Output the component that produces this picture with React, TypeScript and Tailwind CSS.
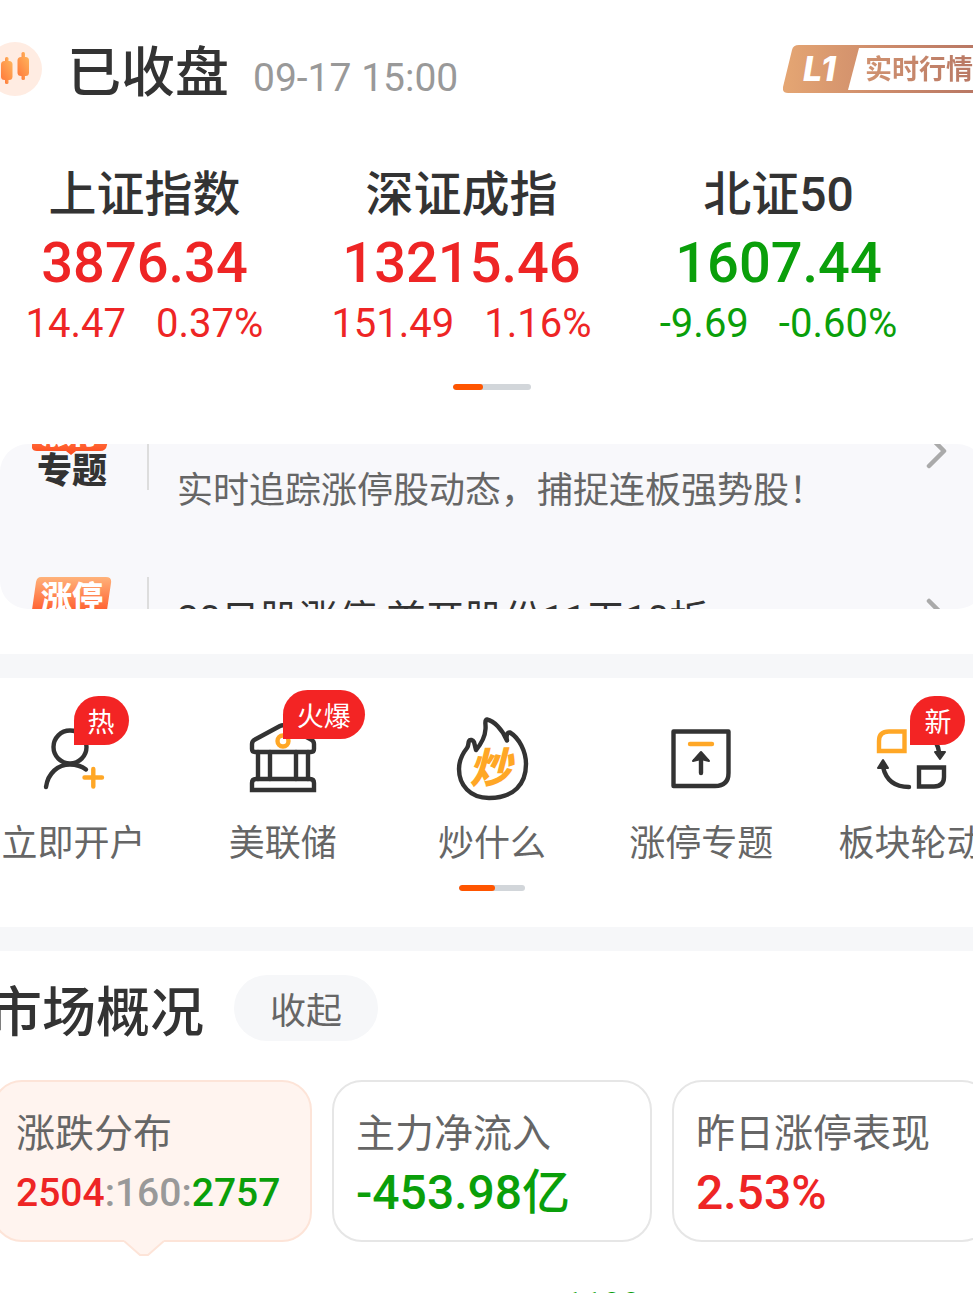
import React from 'react';

// ── Data ────────────────────────────────────────────────────────────────────

type Trend = 'up' | 'down';

interface IndexQuote {
  name: string;
  value: string;
  change: string;
  percent: string;
  trend: Trend;
}

interface Shortcut {
  label: string;
  icon: React.ReactNode;
  badge?: string;
}

const QUOTES: IndexQuote[] = [
  { name: '上证指数', value: '3876.34',  change: '14.47',  percent: '0.37%',  trend: 'up' },
  { name: '深证成指', value: '13215.46', change: '151.49', percent: '1.16%',  trend: 'up' },
  { name: '北证50',   value: '1607.44',  change: '-9.69',  percent: '-0.60%', trend: 'down' },
];

const SHORTCUTS: Shortcut[] = [
  { label: '立即开户', icon: <AccountIcon />, badge: '热' },
  { label: '美联储',   icon: <BankIcon />,    badge: '火爆' },
  { label: '炒什么',   icon: <FlameIcon /> },
  { label: '涨停专题', icon: <LimitUpIcon /> },
  { label: '板块轮动', icon: <RotationIcon />, badge: '新' },
];

const trendColor: Record<Trend, string> = {
  up: 'text-[#ee2525]',
  down: 'text-[#0a9f0a]',
};

// ── Page ────────────────────────────────────────────────────────────────────

export default function App() {
  return (
    <main className="h-screen overflow-hidden bg-white font-['Roboto','Noto_Sans_CJK_SC',sans-serif] text-[#333]">
      <StatusHeader />

      {/* Indices */}
      <section className="mt-[65px]">
        <div className="-ml-[14px] mr-9 grid grid-cols-3">
          {QUOTES.map((q) => (
            <QuoteCell key={q.name} quote={q} />
          ))}
        </div>
        <div className="mt-[33px] flex justify-center pl-[11px]">
          <Pager trackClass="w-[78px]" thumbClass="w-[30px]" />
        </div>
      </section>

      {/* News ticker */}
      <section className="-mr-3 mt-[54px] h-[165px] overflow-hidden rounded-[28px] bg-[#f8f8fb]">
        <ul className="-mt-[76px]">
          <TickerRow>
            <span className="pt-20 text-[36px] leading-[50px] text-[#666]">
              实时追踪涨停股动态，捕捉连板强势股！
            </span>
          </TickerRow>
          <TickerRow>
            <span className="pt-2 text-[39px] leading-[50px]">20日股涨停 首开股份11天10折</span>
          </TickerRow>
        </ul>
      </section>

      <div className="mt-[45px] h-6 bg-[#f6f7f9]" />

      {/* Shortcuts */}
      <nav className="pb-9">
        <div className="-ml-[31px] -mr-[42px] grid grid-cols-5">
          {SHORTCUTS.map((s) => (
            <ShortcutButton key={s.label} shortcut={s} />
          ))}
        </div>
        <div className="mt-[13px] flex justify-center pl-[11px]">
          <Pager trackClass="w-[66px]" thumbClass="w-9" />
        </div>
      </nav>

      <div className="h-6 bg-[#f6f7f9]" />

      {/* Market overview */}
      <section className="pt-6">
        <div className="-ml-3 flex items-center gap-[30px]">
          <h2 className="pt-3 text-[54px] font-medium leading-[54px]">市场概况</h2>
          <button className="h-[66px] w-36 rounded-full bg-[#f6f7f9] pt-2 text-[36px] leading-[58px] text-[#666]">
            收起
          </button>
        </div>

        <div className="-ml-2 -mr-[19px] mt-[39px] grid grid-cols-3 gap-5">
          <OverviewCard label="涨跌分布" active>
            <span className="text-[39px] text-[#999]">
              <span className="text-[#ee2525]">2504</span>:160:<span className="text-[#0a9f0a]">2757</span>
            </span>
          </OverviewCard>
          <OverviewCard label="主力净流入">
            <span className="text-[48px] text-[#0a9f0a]">-453.98亿</span>
          </OverviewCard>
          <OverviewCard label="昨日涨停表现">
            <span className="text-[48px] text-[#ee2525]">2.53%</span>
          </OverviewCard>
        </div>

        <p className="mt-[42px] pl-[58%] text-[34px] leading-10 text-[#0a9f0a]">1199</p>
      </section>
    </main>
  );
}

// ── Header ──────────────────────────────────────────────────────────────────

function StatusHeader() {
  return (
    <header className="-ml-3 -mr-3 flex h-24 items-center pt-[42px]">
      <CandleIcon />
      <h1 className="ml-[25px] pt-[10px] text-[54px] font-medium leading-[54px]">已收盘</h1>
      <time className="ml-6 pt-[18px] text-[39px] leading-[38px] text-[#999]">09-17 15:00</time>
      <a href="#level1" className="relative ml-auto flex h-12 w-[202px] items-center">
        <LevelFrame />
        <span className="relative w-[82px] pl-5 font-['Inter'] text-[34px] font-extrabold italic leading-[48px] text-white">
          L1
        </span>
        <span className="relative whitespace-nowrap bg-gradient-to-r from-[#d09270] to-[#b97965] bg-clip-text pt-[3px] text-[27px] font-bold leading-[45px] text-transparent">
          实时行情
        </span>
      </a>
    </header>
  );
}

// ── Building blocks ─────────────────────────────────────────────────────────

function QuoteCell({ quote }: { quote: IndexQuote }) {
  return (
    <a href="#quote" className={`flex flex-col items-center whitespace-nowrap ${trendColor[quote.trend]}`}>
      <span className="text-[48px] font-medium leading-[68px] text-[#333]">{quote.name}</span>
      <span className="text-[56px] font-medium leading-[68px]">{quote.value}</span>
      <span className="flex gap-[30px] text-[40px] leading-[54px]">
        <span>{quote.change}</span>
        <span>{quote.percent}</span>
      </span>
    </a>
  );
}

function Pager({ trackClass, thumbClass }: { trackClass: string; thumbClass: string }) {
  return (
    <div className={`h-[6px] overflow-hidden rounded-full bg-[#d2d6da] ${trackClass}`}>
      <div className={`h-full rounded-full bg-[#ff5500] ${thumbClass}`} />
    </div>
  );
}

function TickerRow({ children }: { children: React.ReactNode }) {
  return (
    <li className="flex h-[165px] items-center pl-8 pr-9">
      <TopicLogo />
      <div className="ml-[35px] h-[78px] w-[2px] bg-[#ddd]" />
      <div className="ml-7 flex flex-1 items-center whitespace-nowrap">{children}</div>
      <svg className="h-9 w-6" viewBox="0 0 24 36" fill="none" stroke="#aaa" strokeWidth="4.5" strokeLinecap="round" strokeLinejoin="round">
        <path d="M4 3L19 18L4 33" />
      </svg>
    </li>
  );
}

function TopicLogo() {
  return (
    <div className="flex w-20 flex-col items-center text-[35px] font-black leading-[36px]">
      <div className="relative h-10 w-20 pt-[3px] text-center text-[31px] text-white">
        <svg className="absolute inset-0 h-11 w-20" viewBox="0 0 80 44">
          <defs>
            <linearGradient id="topic" x1="0" y1="0" x2="0" y2="1">
              <stop offset="0" stopColor="#ffb27a" />
              <stop offset="1" stopColor="#ff4a1c" />
            </linearGradient>
          </defs>
          <path fill="url(#topic)" d="M9 0H74Q80 0 79 6L75 33Q74 39 68 39H44L39 43L34 39H5Q-1 39 0 33L4 5Q5 0 9 0Z" />
        </svg>
        <span className="relative">涨停</span>
      </div>
      <span className="pt-[2px]">专题</span>
    </div>
  );
}

function ShortcutButton({ shortcut }: { shortcut: Shortcut }) {
  const wide = (shortcut.badge?.length ?? 0) > 1;
  return (
    <button className="relative flex flex-col items-center whitespace-nowrap">
      <span className="flex h-[138px] items-center pt-6">{shortcut.icon}</span>
      {shortcut.badge && (
        <span
          className={`absolute left-1/2 h-[49px] rounded-full rounded-bl-none bg-[#f32424] px-[14px] pt-[5px] text-[27px] leading-[44px] text-white ${
            wide ? 'top-3' : 'top-[18px]'
          }`}
        >
          {shortcut.badge}
        </span>
      )}
      <span className="text-[36px] leading-[56px] text-[#666]">{shortcut.label}</span>
    </button>
  );
}

function OverviewCard({ label, active, children }: { label: string; active?: boolean; children: React.ReactNode }) {
  return (
    <article
      className={`relative h-[162px] whitespace-nowrap rounded-[30px] border-2 pl-[22px] pt-6 ${
        active ? 'border-[#fde4d8] bg-[#fff4ef]' : 'border-[#e6e6e6] bg-white'
      }`}
    >
      <h3 className="text-[39px] leading-[56px] text-[#666]">{label}</h3>
      <p className="font-medium leading-[62px]">{children}</p>
      {active && (
        <svg className="absolute left-[130px] top-[157px] h-[18px] w-10" viewBox="0 0 40 18">
          <path fill="#fff4ef" d="M0 0H40V2L24 16H16L0 2Z" />
          <path fill="none" stroke="#fde4d8" strokeWidth="2" d="M0 2L16 16H24L40 2" />
        </svg>
      )}
    </article>
  );
}

// ── Icons ───────────────────────────────────────────────────────────────────

function CandleIcon() {
  return (
    <svg className="size-[54px] shrink-0" viewBox="0 0 54 54">
      <defs>
        <linearGradient id="candle" x1="0" y1="1" x2="1" y2="0">
          <stop offset="0" stopColor="#ff7a3c" />
          <stop offset="1" stopColor="#ffb45c" />
        </linearGradient>
      </defs>
      <circle cx="27" cy="27" r="27" fill="#ffece2" />
      <g fill="url(#candle)">
        <rect x="17" y="15" width="3.500" height="27" rx="1.5" />
        <rect x="13" y="19" width="11.500" height="19" rx="3.5" />
        <rect x="33.500" y="10" width="3.500" height="28" rx="1.5" />
        <rect x="29.500" y="15" width="11.500" height="19" rx="3.5" />
      </g>
    </svg>
  );
}

function LevelFrame() {
  return (
    <svg className="absolute inset-0 h-12 w-[202px]" viewBox="0 0 202 48">
      <defs>
        <linearGradient id="level" x1="0" y1="0" x2="1" y2="0">
          <stop offset="0" stopColor="#e5a673" />
          <stop offset="0.5" stopColor="#cd8b6b" />
          <stop offset="1" stopColor="#b67563" />
        </linearGradient>
      </defs>
      <path fill="url(#level)" d="M16 0H202V48H5Q-1 48 0 42L9 5Q10 0 16 0Z" />
      <path fill="#fff" d="M76 3H202V45H65Z" />
    </svg>
  );
}

function IconBase({ children }: { children: React.ReactNode }) {
  return (
    <svg className="size-24" viewBox="0 0 96 96" fill="none" stroke="#333" strokeWidth="4.4" strokeLinecap="round" strokeLinejoin="round">
      {children}
    </svg>
  );
}

function AccountIcon() {
  return (
    <IconBase>
      <circle cx="44" cy="36" r="16.5" />
      <path d="M20 76C22 62 32 53.500 44 53.500C51 53.500 56 55.500 60 58.500" />
      <path stroke="#ffa726" d="M58.500 66.500H76M67.300 58V75.500" />
    </IconBase>
  );
}

function BankIcon() {
  return (
    <IconBase>
      <path d="M17 38V33Q17 30 20 28.500L45 15Q48 13.500 51 15L76 28.500Q79 30 79 33V38Q79 41 76 41H20Q17 41 17 38Z" />
      <path d="M23 41V68M35 41V68M61 41V68M73 41V68" />
      <path strokeLinejoin="miter" d="M17 79V72Q17 68 21 68H75Q79 68 79 72V79Z" />
      <circle cx="48" cy="30" r="5.500" stroke="#ffa726" />
    </IconBase>
  );
}

function FlameIcon() {
  return (
    <IconBase>
      <path d="M43 8.500C50 10 58 18 63 29.500C62 25 63 21 66 21.500C75 27 82 40 82 53C82 73 70 87 45 87C26 87 15 74 15 58C15 49 19 42 23 37C25 34 24 32 25 30C26 28 29 29 30 31L32 39C37 33 41 27 41.500 18C42 13 40 9 43 8.500Z" />
      <text
        x="46"
        y="72"
        textAnchor="middle"
        fill="#ffa726"
        stroke="none"
        className="font-['Noto_Sans_CJK_SC',sans-serif] text-[42px] font-black italic"
      >
        炒
      </text>
    </IconBase>
  );
}

function LimitUpIcon() {
  return (
    <IconBase>
      <path d="M20.500 20.500H75.500V62Q75.500 75 62 75H20.500Z" />
      <path stroke="#ffa726" d="M37 33H59" />
      <path d="M48 62V46" />
      <path fill="#333" strokeWidth="2" d="M48 41L40 50L48 48L56 50Z" />
    </IconBase>
  );
}

function RotationIcon() {
  return (
    <IconBase>
      <path stroke="#ffa726" strokeLinejoin="miter" d="M17 40V30Q17 20.500 27 20.500H42.500V40Z" />
      <path strokeLinejoin="miter" d="M57 56.500H82V66Q82 75.500 72 75.500H57Z" />
      <path d="M21 56C24 69 33 76 47 76" />
      <path fill="#333" strokeWidth="2" d="M21 49L16 57H26Z" />
      <path d="M77 41C75 28 67 21 54 20.500" />
      <path fill="#333" strokeWidth="2" d="M78 48L73 41H83Z" />
    </IconBase>
  );
}
